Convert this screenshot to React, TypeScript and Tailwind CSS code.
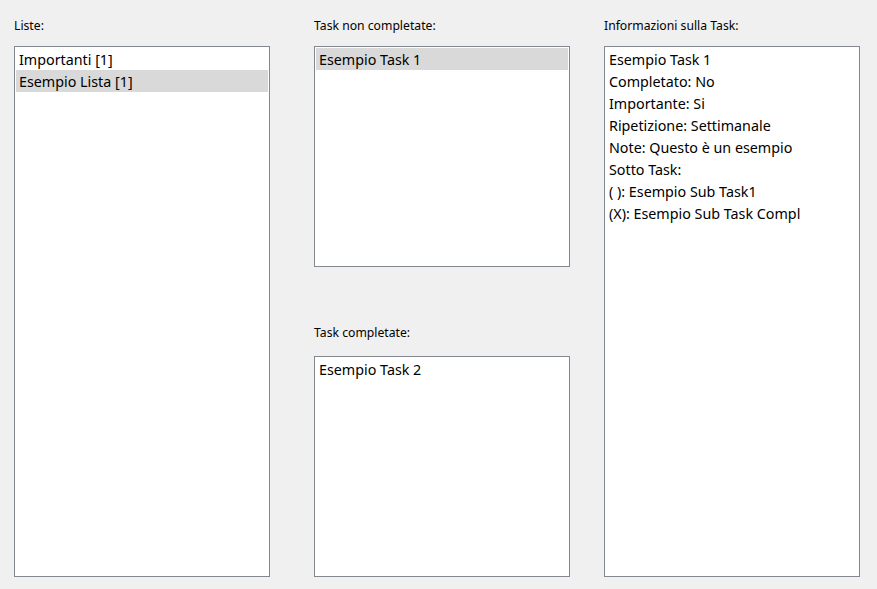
import React from "react";

const font = { fontFamily: '"Noto Sans", "Open Sans", sans-serif' };

function ListBox({
  items,
  selected,
  className = "",
}: {
  items: string[];
  selected?: number;
  className?: string;
}) {
  return (
    <div className={`w-[256px] border border-[#828790] bg-white p-[1px] ${className}`}>
      {items.map((item, i) => (
        <div
          key={item}
          className={`h-[22px] px-[3px] pt-[2px] text-[14.3px] leading-[20px] text-black whitespace-nowrap ${
            i === selected ? "bg-[#d9d9d9]" : ""
          }`}
        >
          {item}
        </div>
      ))}
    </div>
  );
}

function Label({ text, className = "" }: { text: string; className?: string }) {
  return <div className={`text-[12.2px] leading-[16px] text-black ${className}`}>{text}</div>;
}

export default function App() {
  const info = [
    "Esempio Task 1",
    "Completato: No",
    "Importante: Si",
    "Ripetizione: Settimanale",
    "Note: Questo è un esempio",
    "Sotto Task:",
    "( ): Esempio Sub Task1",
    "(X): Esempio Sub Task Compl",
  ];

  return (
    <div className="w-[877px] h-[589px] bg-[#f0f0f0] flex pl-[14px] pt-[18px]" style={font}>
      {/* Liste */}
      <div className="flex flex-col">
        <Label text="Liste:" className="mb-[12px]" />
        <ListBox items={["Importanti [1]", "Esempio Lista [1]"]} selected={1} className="h-[531px]" />
      </div>

      {/* Task */}
      <div className="flex flex-col ml-[44px]">
        <Label text="Task non completate:" className="mb-[12px]" />
        <ListBox items={["Esempio Task 1"]} selected={0} className="h-[221px]" />
        <Label text="Task completate:" className="mt-[58px] mb-[15px]" />
        <ListBox items={["Esempio Task 2"]} className="h-[221px]" />
      </div>

      {/* Informazioni */}
      <div className="flex flex-col ml-[34px]">
        <Label text="Informazioni sulla Task:" className="mb-[12px]" />
        <div className="w-[256px] h-[531px] border border-[#828790] bg-white p-[1px]">
          {info.map((line) => (
            <div key={line} className="h-[22px] px-[3px] pt-[2px] text-[14.3px] leading-[20px] text-black whitespace-nowrap">
              {line}
            </div>
          ))}
        </div>
      </div>
    </div>
  );
}
